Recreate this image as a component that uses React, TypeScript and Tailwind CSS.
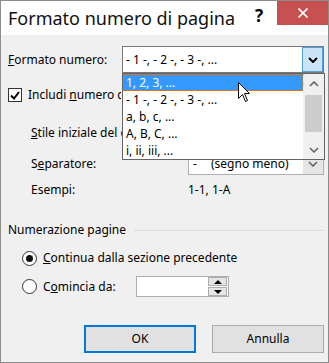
import React from 'react';

const Chevron = ({ up = false, color = '#000', width = 2 }: { up?: boolean; color?: string; width?: number }) => (
  <svg width="10" height="6" viewBox="0 0 10 6" className={up ? 'rotate-180' : ''}>
    <polyline points="1,1 5,5 9,1" fill="none" stroke={color} strokeWidth={width} />
  </svg>
);

const Tri = ({ up = false }: { up?: boolean }) => (
  <svg width="8" height="4" viewBox="0 0 8 4">
    <polygon points={up ? '0,4 8,4 4,0' : '0,0 8,0 4,4'} fill="#000" />
  </svg>
);

const listItems = ['1, 2, 3, ...', '- 1 -, - 2 -, - 3 -, ...', 'a, b, c, ...', 'A, B, C, ...', 'i, ii, iii, ...'];

export default function App() {
  return (
    <div className="relative flex h-[363px] w-[329px] flex-col border border-[#8c8c8c] bg-[#f0f0f0] font-['Noto_Sans',sans-serif] text-[12px] text-black">
      {/* title bar */}
      <div className="flex h-[34px] shrink-0 justify-between bg-white">
        <div className="whitespace-nowrap pl-[7px] pt-[5px] text-[18px] leading-[24px] text-[#111]">Formato numero di pagina</div>
        <div className="flex items-start">
          <div className="mr-[14px] mt-[5px] text-[17px] font-bold leading-[20px]">?</div>
          <div className="flex h-[24px] w-[51px] items-center justify-center bg-[#c75050]">
            <svg width="10" height="10" viewBox="0 0 10 10">
              <path d="M0.5 0.5 L9.5 9.5 M9.5 0.5 L0.5 9.5" stroke="#fff" strokeWidth="1.6" />
            </svg>
          </div>
        </div>
      </div>

      {/* body */}
      <div className="flex flex-col pl-[7px] pr-[4px]">
        <div className="mt-[11px] flex h-[27px] items-center">
          <div className="w-[114px]"><u>F</u>ormato numero:</div>
          <div className="flex h-[27px] flex-1 items-center border border-[#7a7a7a] bg-white">
            <span className="flex-1 pl-[3px]">- 1 -, - 2 -, - 3 -, ...</span>
            <div className="flex h-full w-[21px] items-center justify-center border border-[#569de5] bg-[#cce4f7]">
              <Chevron />
            </div>
          </div>
        </div>

        <div className="mt-[14px] flex h-[16px] items-center">
          <div className="flex h-[14px] w-[14px] shrink-0 items-center justify-center border border-[#333] bg-white">
            <svg width="10" height="9" viewBox="0 0 10 9">
              <polyline points="1,4.5 4,7.5 9,1" fill="none" stroke="#000" strokeWidth="2" />
            </svg>
          </div>
          {/* the open list covers the rest of this label */}
          <span className="ml-[6px] w-[93px] overflow-hidden whitespace-nowrap">Includi <u>n</u>umero di capitolo</span>
        </div>

        <div className="mt-[20px] flex h-[20px] items-center pl-[23px]">
          <div className="w-[91px] overflow-hidden whitespace-nowrap"><u>S</u>tile iniziale del capitolo:</div>
          <div className="ml-[66px] h-[20px] flex-1 border border-[#7a7a7a] bg-white" />
        </div>

        <div className="mt-[10px] flex h-[22px] items-center pl-[23px]">
          <div className="w-[157px]">S<u>e</u>paratore:</div>
          <div className="flex h-[22px] flex-1 items-center border border-[#adadad] bg-white">
            <span className="w-[22px] pl-[4px]">-</span>
            <span className="flex-1">(segno meno)</span>
            <div className="flex h-full w-[20px] items-center justify-center bg-[#e5e5e5]">
              <Chevron color="#606060" width={1.5} />
            </div>
          </div>
        </div>

        <div className="mt-[7px] flex h-[16px] items-center pl-[23px]">
          <div className="w-[157px]">Esempi:</div>
          <span>1-1, 1-A</span>
        </div>

        <div className="mt-[24px] flex h-[16px] items-center">
          <span className="whitespace-nowrap">Numerazione pagine</span>
          <div className="ml-[8px] h-px flex-1 bg-[#dcdcdc]" />
        </div>

        <div className="mt-[12px] flex h-[16px] items-center pl-[14px]">
          <div className="flex h-[15px] w-[15px] items-center justify-center rounded-full border border-[#333] bg-white">
            <div className="h-[7px] w-[7px] rounded-full bg-[#111]" />
          </div>
          <span className="ml-[6px]"><u>C</u>ontinua dalla sezione precedente</span>
        </div>

        <div className="mt-[10px] flex h-[21px] items-center pl-[14px]">
          <div className="h-[15px] w-[15px] rounded-full border border-[#333] bg-white" />
          <span className="ml-[6px] w-[93px]">C<u>o</u>mincia da:</span>
          <div className="flex h-[21px] w-[93px] items-center justify-end border border-[#adadad] bg-white pr-px">
            <div className="flex h-[19px] w-[19px] flex-col gap-px">
              <div className="flex flex-1 items-center justify-center border border-[#adadad] bg-[#e5e5e5]"><Tri up /></div>
              <div className="flex flex-1 items-center justify-center border border-[#adadad] bg-[#e5e5e5]"><Tri /></div>
            </div>
          </div>
        </div>

        <div className="mt-[28px] flex justify-end gap-[16px]">
          <div className="flex h-[28px] w-[112px] items-center justify-center border-2 border-[#0078d7] bg-[#e1e1e1]">OK</div>
          <div className="flex h-[28px] w-[112px] items-center justify-center border border-[#adadad] bg-[#e1e1e1]">Annulla</div>
        </div>
      </div>

      {/* open dropdown list */}
      <div className="absolute left-[121px] top-[72px] flex h-[87px] w-[203px] border border-[#646464] bg-white">
        <div className="flex flex-1 flex-col">
          {listItems.map((item, i) => (
            <div
              key={item}
              className={
                i === 0
                  ? 'flex h-[17px] items-center border border-dotted border-[#e07020] bg-[#3399ff] pl-[2px] text-white'
                  : 'flex h-[17px] items-center pl-[3px]'
              }
            >
              {item}
            </div>
          ))}
        </div>
        <div className="flex w-[21px] flex-col items-center bg-[#f0f0f0]">
          <div className="flex h-[19px] items-center"><Chevron up color="#606060" width={1.5} /></div>
          <div className="mt-[2px] h-[37px] w-[17px] bg-[#cdcdcd]" />
          <div className="mt-auto flex h-[19px] items-center"><Chevron color="#606060" width={1.5} /></div>
        </div>
      </div>

      {/* mouse cursor */}
      <svg className="absolute left-[237px] top-[81px]" width="13" height="21" viewBox="0 0 13 21">
        <path d="M0.5 0.5 L0.5 16.5 L4.5 12.5 L7.5 19.5 L9.5 18.5 L6.5 11.5 L11.5 11.5 Z" fill="#fff" stroke="#000" strokeWidth="1" strokeLinejoin="round" />
      </svg>
    </div>
  );
}
